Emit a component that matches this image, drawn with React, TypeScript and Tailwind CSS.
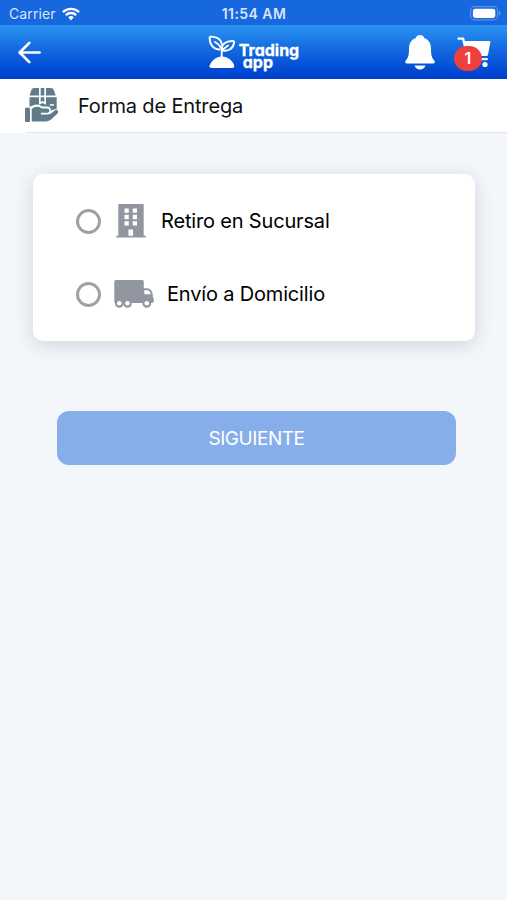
import { useState } from "react";

type IconProps = {
	className?: string;
};

const WifiIcon: React.FC<IconProps> = ({ className }) => (
	<svg viewBox="0 0 18 14" className={className} fill="none" stroke="white" strokeWidth="2.3">
		<path d="M.9 5.1a11.6 11.6 0 0 1 16.2 0" />
		<path d="M3.8 8.1a7.5 7.5 0 0 1 10.4 0" />
		<path d="M6.2 10.3a4 4 0 0 1 5.6 0L9 13.4z" fill="white" stroke="none" />
	</svg>
);

const BatteryIcon: React.FC<IconProps> = ({ className }) => (
	<svg viewBox="0 0 31 15" className={className}>
		<rect x=".6" y=".6" width="27" height="13.3" rx="4" fill="none" stroke="white" strokeOpacity=".3" strokeWidth="1.1" />
		<rect x="2.9" y="2.7" width="22.4" height="9.2" rx="2.3" fill="white" />
		<path d="M29 5v4.6c1.8-.7 1.8-3.9 0-4.6z" fill="white" fillOpacity=".4" />
	</svg>
);

const BackIcon: React.FC<IconProps> = ({ className }) => (
	<svg viewBox="0 0 22 22" className={className} fill="none" stroke="white" strokeWidth="2.6" strokeLinecap="round" strokeLinejoin="round">
		<path d="M10.8 1.8L1.6 11l9.2 9.2M1.8 11H20.6" />
	</svg>
);

const SproutIcon: React.FC<IconProps> = ({ className }) => (
	<svg viewBox="0 0 28 34" className={className} fill="none" stroke="white" strokeWidth="1.9" strokeLinecap="round" strokeLinejoin="round">
		<path d="M11.500 14.500C5.500 14.500 1.500 9.500 1.600 2.600 2 1.500 3 1.500 4 1.600 9.500 2 13.200 5 13.700 9.200" />
		<path d="M7 7C10.500 9 13.400 11.500 13.700 16V22" />
		<path d="M13.900 15.300C13 9.500 18 5.600 25 6 26.200 6.200 26.300 7 26 8 25 14 19.500 17 13.900 15.300L20 10.500" />
		<path d="M2 31.300C3 25.500 9 22 14 22S25 25.500 25.800 31.300Q26 32.500 24.500 32.500H3.300Q1.800 32.500 2 31.300z" fill="white" strokeWidth="1" />
	</svg>
);

const BellIcon: React.FC<IconProps> = ({ className }) => (
	<svg viewBox="0 0 30 35" className={className} fill="white">
		<path d="M15 0c-2.200 0-3.700 1.300-4.200 3C6.300 4.600 4 8.500 4 13.800c0 7-1 9.300-3.400 12-.9 1.300-.3 2.600 1.200 2.600h26.400c1.500 0 2.100-1.300 1.200-2.600-2.400-2.700-3.400-5-3.400-12C26 8.500 23.700 4.600 19.200 3 18.700 1.300 17.200 0 15 0z" />
		<path d="M9.500 30.400h11c-.9 2.600-3 4.100-5.500 4.100s-4.600-1.500-5.500-4.100z" />
	</svg>
);

const CartIcon: React.FC<IconProps> = ({ className }) => (
	<svg viewBox="0 0 34 31" className={className}>
		<path d="M6.500 4H32.300c.7 0 1.100.5 1 1.200L31 17.400c-.2 1-.8 1.500-1.700 1.500H9.500z" fill="white" />
		<path d="M1.500 1.700h4.700L10.800 22.200H29.800" fill="none" stroke="white" strokeWidth="2.300" strokeLinecap="round" strokeLinejoin="round" />
		<circle cx="12" cy="27.500" r="2.600" fill="white" />
		<circle cx="28" cy="27.500" r="2.600" fill="white" />
	</svg>
);

const DeliveryIcon: React.FC<IconProps> = ({ className }) => (
	<svg viewBox="0 0 34 35" className={className} fill="#5f7c88">
		<path d="M9.200 0H14v7.500H4.500L6.400 2C6.900.7 7.800 0 9.200 0zM15.700 0h3.600v7.500h-3.600zM21 0h5c1.400 0 2.300.7 2.800 2l1.900 5.500H21z" />
		<path d="M4.500 9.200H14v7.500l3.500-1.800 3.500 1.800V9.200h10.700v12.300c-2-1-4 .2-5.700 1.400.2-3-1.500-4.400-4-4.400H17c-2-1.500-4.500-2.300-7-1.700-2 .4-3.600 1.400-5.500 2z" />
		<path d="M15.700 9.200h3.600v4.700l-1.800-.9-1.800.9z" />
		<rect x="0" y="19.700" width="5" height="14.300" rx="1" />
		<path d="M6.700 21c3-2.400 6-3.200 9.200-1.200l1.200.7h5c1.600 0 2.400 1.200 2.200 2.400-.2 1.200-1 1.800-2.200 1.800h-6.200v1.700h7c1.500 0 2.600-.6 3.700-1.400l3.200-2.500c1.100-.8 2.500-.6 3.100.3.600 1 .3 2-.6 2.900l-6 5.600c-1.700 1.500-3.200 2.100-5.500 2.100H6.700z" />
		<path d="M24.800 16.200h4.200v1.500h-4.200z" fill="white" />
	</svg>
);

const BuildingIcon: React.FC<IconProps> = ({ className }) => (
	<svg viewBox="0 0 30 34" className={className} fill="#9196a0">
		<path
			fillRule="evenodd"
			d="M3.300 0h23.400q1 0 1 1v30.600h1q1 0 1 1v1H.3v-1q0-1 1-1h1V1q0-1 1-1zM8.500 4.400v4.400h4.300v-4.400zM16.700 4.400v4.400h4.300v-4.400zM8.500 10.800v4.400h4.300v-4.400zM16.700 10.800v4.400h4.300v-4.400zM8.500 17.200v4.400h4.300v-4.400zM16.700 17.200v4.400h4.300v-4.400zM12.400 25.600v6.200h4.600v-6.200z"
		/>
	</svg>
);

const TruckIcon: React.FC<IconProps> = ({ className }) => (
	<svg viewBox="0 0 40 28" className={className} fill="#9196a0">
		<path d="M1.800 0h26.500q1.500 0 1.500 1.500v6.800h3.400c3.200 0 5.400 3.200 5.600 6.500v2.500q1 .2 1 1.200v2.600q0 1.800-1.800 1.800H1.800Q.3 22.900.3 21.400V1.500Q.3 0 1.800 0z" />
		<path d="M30.300 10.200h2.800c2 0 3 1.500 3.600 4h-6.400z" fill="white" />
		<circle cx="5.300" cy="23.400" r="4.300" />
		<circle cx="13.500" cy="23.400" r="4.300" />
		<circle cx="32.800" cy="23.400" r="4.300" />
		<circle cx="5.300" cy="23.200" r="2.200" fill="white" />
		<circle cx="13.500" cy="23.200" r="2.200" fill="white" />
		<circle cx="32.800" cy="23.200" r="2.300" fill="white" />
	</svg>
);

type OptionProps = {
	label: string;
	selected: boolean;
	onSelect: () => void;
	children: React.ReactNode;
};

const DeliveryOption: React.FC<OptionProps> = ({ label, selected, onSelect, children }) => (
	<button
		type="button"
		role="radio"
		aria-checked={selected}
		onClick={onSelect}
		className="flex h-[73px] items-center text-[20px] tracking-[-0.17px] text-black">
		<span className="mr-[13px] flex size-[25px] items-center justify-center rounded-full border-[3px] border-[#a0a0a0]">
			{selected && <span className="size-3 rounded-full bg-[#1767df]" />}
		</span>
		{children}
		<span>{label}</span>
	</button>
);

const App: React.FC = () => {
	const [delivery, setDelivery] = useState("");

	return (
		<div className="flex min-h-screen flex-col bg-[#f3f6fa] font-['Inter','Liberation_Sans',sans-serif]">
			<div className="grid h-[25px] grid-cols-3 items-center bg-[#1767df] pt-[2px] pr-[6px] pl-[9px] text-[14px] text-white">
				<div className="flex items-center gap-[6px] text-[#d5e5fb]">
					<span className="tracking-[0.1px]">Carrier</span>
					<WifiIcon className="h-[14px] w-[18px]" />
				</div>
				<span className="pr-[2px] text-center font-semibold tracking-[0.45px] text-[#d5e5fb]">11:54 AM</span>
				<BatteryIcon className="h-[15px] w-[31px] justify-self-end" />
			</div>

			<header className="grid h-[54px] grid-cols-3 items-center bg-linear-to-b from-[#2b94f1] via-[#1264df] to-[#003dcd] pr-4 pl-[18px]">
				<button type="button" aria-label="Volver">
					<BackIcon className="size-[23px]" />
				</button>
				<div className="flex items-center justify-center gap-[3px] pr-[2px]">
					<SproutIcon className="h-[34px] w-[28px]" />
					<div className="pt-[7px] text-[16px] leading-[12px] font-bold tracking-[0px] text-white [-webkit-text-stroke:0.3px_white] [font-feature-settings:'cv11'_1]">
						<div>Trading</div>
						<div className="pl-1">app</div>
					</div>
				</div>
				<div className="flex items-center justify-end gap-[22px]">
					<BellIcon className="h-[35px] w-[30px]" />
					<div className="relative">
						<CartIcon className="h-[31px] w-[34px]" />
						<span className="absolute top-[9px] -left-[3px] flex h-[25px] w-[28px] items-center justify-center rounded-full bg-[#ee403d] pb-px text-[16px] font-semibold text-white">
							1
						</span>
					</div>
				</div>
			</header>

			<div className="flex h-[53px] items-center gap-[19px] bg-white pl-[25px]">
				<DeliveryIcon className="h-[35px] w-[34px]" />
				<h1 className="text-[20px] tracking-[-0.15px] text-[#111]">Forma de Entrega</h1>
			</div>
			<div className="flex h-px bg-[#e3e5e8]">
				<div className="w-[26px] bg-white" />
			</div>

			<main className="flex flex-col">
				<div
					role="radiogroup"
					className="mt-[41px] mr-8 ml-[33px] flex h-[167px] flex-col justify-center rounded-[10px] bg-white pl-[43px] shadow-[0_4px_20px_rgba(0,0,0,0.14)]">
					<DeliveryOption
						label="Retiro en Sucursal"
						selected={delivery === "sucursal"}
						onSelect={() => setDelivery("sucursal")}>
						<BuildingIcon className="mr-[15px] ml-[2px] h-[34px] w-[30px]" />
					</DeliveryOption>
					<DeliveryOption
						label="Envío a Domicilio"
						selected={delivery === "domicilio"}
						onSelect={() => setDelivery("domicilio")}>
						<TruckIcon className="mr-[13px] h-[28px] w-[40px]" />
					</DeliveryOption>
				</div>

				<button
					type="button"
					className="mt-[70px] mr-[51px] ml-[57px] h-[54px] rounded-xl bg-[#86aeea] pt-[2px] text-[19px] tracking-[-0.45px] text-white">
					SIGUIENTE
				</button>
			</main>
		</div>
	);
};

export default App;
